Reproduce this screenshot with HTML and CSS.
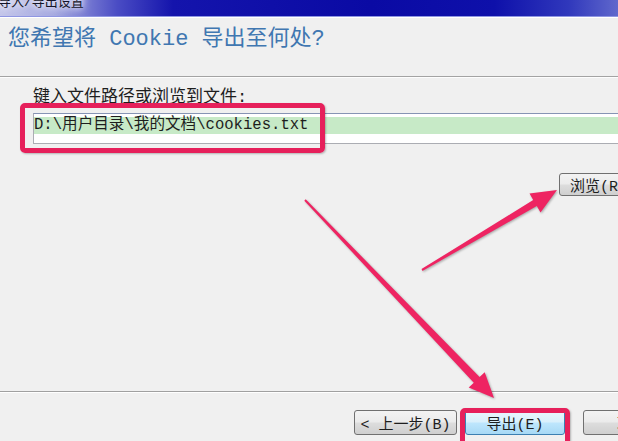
FILE: index.html
```html
<!DOCTYPE html>
<html lang="zh-CN">

<head>
    <meta charset="UTF-8">
    <meta name="viewport" content="width=device-width, initial-scale=1.0">
    <title>导入/导出设置</title>
    <link rel="stylesheet" href="styles.css">
</head>

<body>
    <main class="window">
        <!-- 标题栏 -->
        <div class="titlebar"><span class="title">导入/导出设置</span></div>

        <!-- 顶部说明 -->
        <div class="header">
            <h1>您希望将 Cookie 导出至何处?</h1>
        </div>

        <!-- 文件路径 -->
        <section class="content">
            <div class="label">键入文件路径或浏览到文件:</div>
            <div class="path">
                <span class="sel">D:\用户目录\我的文档\cookies.txt</span>
            </div>
            <button class="btn browse">浏览(R)</button>
        </section>

        <!-- 底部按钮 -->
        <footer class="footer">
            <button class="btn back">&lt; 上一步(B)</button>
            <button class="btn primary">导出(E)</button>
            <button class="btn cancel">取消</button>
        </footer>

        <!-- 标注：红框和箭头 -->
        <div class="mark mark-path"></div>
        <div class="mark mark-export"></div>
        <svg class="arrows" width="618" height="441" viewBox="0 0 618 441">
            <polygon points="421.5,269.1 533.2,200 529.5,193.5 557,190 540.5,212.5 536.8,206 422.5,270.9" />
            <polygon points="305.7,199.3 479.6,377.1 484.7,372.3 494,398 468.7,387.5 473.8,382.7 304.3,200.7" />
        </svg>
    </main>
</body>

</html>
```

FILE: styles.css
```css
* {
    margin: 0;
    padding: 0;
    box-sizing: border-box;
}

body {
    width: 618px;
    height: 441px;
    overflow: hidden;
    background-color: #f0f0f0;
    font-family: "Liberation Mono", "Noto Sans CJK SC", monospace;
    color: #1e1e1e;
}

.window {
    position: relative;
    height: 441px;
    display: flex;
    flex-direction: column;
    overflow: hidden;
}

/* 标题栏 */
.titlebar {
    height: 17px;
    flex-shrink: 0;
    overflow: hidden;
    border-bottom: 1px solid #8f96e2;
    background: linear-gradient(to right, #c4c6ea 0%, #a4a8e0 9%, #4a4cc4 19%, #1414ac 28%, #0a0aa4 60%, #0e10aa 80%, #3038bc 92%, #6068cc 100%);
}

.title {
    display: block;
    margin-top: -6px;
    margin-left: -2px;
    font-size: 13px;
    line-height: 17px;
    color: #141428;
    text-shadow: 0 0 6px #fff, 0 0 10px #fff;
}

/* 顶部说明 */
.header {
    height: 60px;
    flex-shrink: 0;
    padding: 10px 0 0 8px;
    border-bottom: 1px solid #a3a3a3;
    box-shadow: inset 0 1px #fff, 0 1px #fdfdfd;
}

.header h1 {
    font-size: 22px;
    line-height: 26px;
    font-weight: normal;
    color: #4077b1;
}

/* 文件路径 */
.content {
    flex: 1;
    padding: 11px 0 0 33px;
}

.label {
    font-size: 17px;
    line-height: 20px;
}

.path {
    margin-top: 5px;
    width: 600px;
    height: 31px;
    padding-top: 3px;
    border: 1px solid #abadb3;
    border-top-color: #8694b4;
    background-color: #fff;
}

.path .sel {
    display: block;
    height: 17px;
    line-height: 17px;
    font-size: 15.6px;
    background-color: #c7eac7;
}

.btn {
    flex-shrink: 0;
    height: 25px;
    border: 1px solid #707070;
    border-radius: 3px;
    background: linear-gradient(#f3f3f3 0%, #ebebeb 48%, #dddddd 52%, #cfcfcf 100%);
    font-family: "Liberation Mono", "Noto Sans CJK SC", monospace;
    font-size: 15px;
    color: #1e1e1e;
    white-space: nowrap;
}

.browse {
    display: block;
    margin: 29px 0 0 526px;
    width: 80px;
    height: 23px;
    padding-left: 10px;
    text-align: left;
}

/* 底部按钮 */
.footer {
    height: 50px;
    flex-shrink: 0;
    display: flex;
    padding: 18px 0 0 354px;
    border-top: 1px solid #a0a0a0;
    box-shadow: inset 0 1px #fff;
}

.back {
    width: 103px;
    margin-right: 8px;
}

.primary {
    width: 100px;
    margin-right: 18px;
    border-color: #3c7fb1;
    background: linear-gradient(#eaf6fd 0%, #d9f0fc 48%, #bee6fd 52%, #a7d9f5 100%);
}

.cancel {
    width: 98px;
}

/* 标注 */
.mark {
    position: absolute;
    border: 5px solid #e6205b;
    border-radius: 5px;
    box-shadow: 1px 1px 2px rgba(0, 0, 0, .25);
}

.mark-path {
    left: 20px;
    top: 103px;
    width: 305px;
    height: 50px;
}

.mark-export {
    left: 460px;
    top: 408px;
    width: 110px;
    height: 40px;
}

.arrows {
    position: absolute;
    left: 0;
    top: 0;
    fill: #ee2462;
    filter: drop-shadow(1px 1px 1px rgba(0, 0, 0, .3));
}
```
